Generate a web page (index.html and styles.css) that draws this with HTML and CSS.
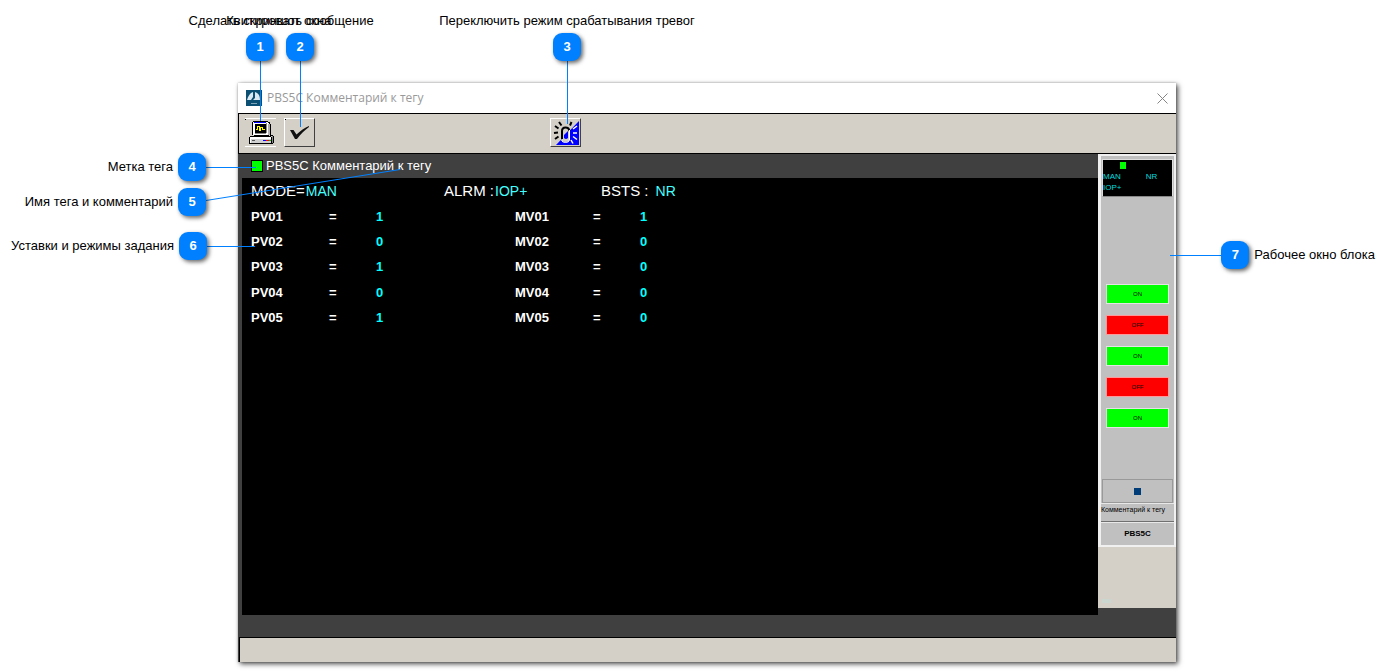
FILE: index.html
```html
<!DOCTYPE html>
<html lang="ru">
<head>
<meta charset="utf-8">
<title>PBS5C Комментарий к тегу</title>
<link rel="stylesheet" href="styles.css">
</head>
<body>
<main class="stage">
  <section class="window">
    <header class="titlebar">
      <svg class="app-icon" viewBox="0 0 16 16" aria-hidden="true">
        <rect width="16" height="16" fill="#0b4f73"/>
        <path d="M1 10C2 6 4 3 7 2V7L5 10zM9 2C12 3 14 5 14 10H7L9 8z" fill="#dbe8ef"/>
        <path d="M5 13.500H11" stroke="#7fa3b7"/>
      </svg>
      <h1 class="title">PBS5C Комментарий к тегу</h1>
      <button class="close" aria-label="Закрыть">
        <svg viewBox="0 0 11 11"><path d="M.5.5 10.5 10.5M10.5.5.5 10.5" stroke="#858585" fill="none"/></svg>
      </button>
    </header>
    <div class="toolbar">
      <button class="tool" aria-label="Сделать скриншот окна">
        <svg viewBox="0 0 26 24" shape-rendering="crispEdges">
          <path d="M4 1H18L21 3V14H4z" fill="#fff"/>
          <path d="M19 3H21V14H19z" fill="#b0b0b0"/>
          <path d="M4 .5H19M3.500 1V14M21.500 3V14M19 1.500H21M20 2.500H21M4 14.500H21" stroke="#000" fill="none"/>
          <path d="M5 1.500H17" stroke="#00f"/><path d="M17.500 2V12M6 12.500H17" stroke="#888" fill="none"/>
          <rect x="6" y="3" width="11" height="9" fill="#000"/>
          <path d="M7 8.500H8.500V5.500H10.500V9.500H11.500V6.500H13.500V8.500H16" stroke="#ff0" fill="none"/>
          <path d="M3 14H21L23 16H1z" fill="#d4d0c8"/>
          <path d="M5 14.500H20" stroke="#000"/>
          <path d="M1 16H23V23H1z" fill="#fff"/><path d="M2 18H22V22H2z" fill="#d0d0d0"/>
          <path d="M23 15H24V22H23z" fill="#888"/>
          <path d="M1 15.500H22M.5 16V23M1 22.500H24M22.500 16V23M21 14.500H24M24.500 15V22" stroke="#000" fill="none"/>
          <path d="M3 19.500H6" stroke="#555"/><path d="M14 19.500H17" stroke="#00f"/><path d="M17 19.500H20" stroke="#f00"/><path d="M20 19.500H22" stroke="#0b0"/>
        </svg>
      </button>
      <button class="tool raised" aria-label="Квитировать сообщение">
        <svg viewBox="0 0 26 24"><path d="M3 9 6.500 9 9.500 13.500C13 10 18 6.500 22 5V6C18 9 13.500 13 10 18L8 18z" fill="#111"/></svg>
      </button>
      <button class="tool raised alarm" aria-label="Переключить режим срабатывания тревог">
        <svg viewBox="0 0 26 24">
          <path d="M26 0V24H3z" fill="#00f"/>
          <path d="M8.500 10Q8.500 6.500 12.500 6.500T16.500 10V18.500Q16.500 21 12.500 21T8.500 18.500z" fill="#d4d0c8"/>
          <path d="M9 18V10Q9 6.500 12.500 6.500T16.500 10" stroke="#000" stroke-width="2" fill="none"/>
          <path d="M11 14 15 10V17Q13 19 11 17z" fill="#00f"/>
          <path d="M16.500 9V19Q16 21.500 12.500 21.500T8.500 19" stroke="#fff" fill="none"/>
          <path d="M6 1 8.500 4.500M18.500 1 17 4.500M2 5 5.500 7.500M1 12 5 11.500M2 18 5.500 15.500" stroke="#000" stroke-width="2" fill="none"/>
          <path d="M20 8 24 5M20 12H24M20 15.500 24 18.500M18 19 20 22.500" stroke="#fff" stroke-width="1.500" fill="none"/>
        </svg>
      </button>
    </div>
    <div class="workspace">
      <div class="details">
        <h2 class="tag-head"><span class="mark"></span>PBS5C Комментарий к тегу</h2>
        <dl class="modes">
          <div class="mode"><dt>MODE=</dt><dd>MAN</dd></div>
          <div class="mode alrm"><dt>ALRM :</dt><dd>IOP+</dd></div>
          <div class="mode bsts"><dt>BSTS :</dt><dd>NR</dd></div>
        </dl>
        <table class="values">
          <tr><th>PV01</th><td class="eq">=</td><td class="pv">1</td><th>MV01</th><td class="eq">=</td><td>1</td></tr>
          <tr><th>PV02</th><td class="eq">=</td><td class="pv">0</td><th>MV02</th><td class="eq">=</td><td>0</td></tr>
          <tr><th>PV03</th><td class="eq">=</td><td class="pv">1</td><th>MV03</th><td class="eq">=</td><td>0</td></tr>
          <tr><th>PV04</th><td class="eq">=</td><td class="pv">0</td><th>MV04</th><td class="eq">=</td><td>0</td></tr>
          <tr><th>PV05</th><td class="eq">=</td><td class="pv">1</td><th>MV05</th><td class="eq">=</td><td>0</td></tr>
        </table>
      </div>
      <aside class="side">
        <div class="faceplate">
          <div class="lcd">
            <span class="lcd-mark"></span>
            <div class="lcd-row"><span>MAN</span><span>NR</span></div>
            <div class="lcd-row">IOP+</div>
          </div>
          <div class="switches">
            <button class="switch on">ON</button>
            <button class="switch off">OFF</button>
            <button class="switch on">ON</button>
            <button class="switch off">OFF</button>
            <button class="switch on">ON</button>
          </div>
          <button class="mode-button" aria-label="Режим"><span class="square"></span></button>
          <p class="comment">Комментарий к тегу</p>
          <p class="tag-name">PBS5C</p>
        </div>
        <span class="hint"></span>
      </aside>
    </div>
    <footer class="status"></footer>
  </section>

  <svg class="leaders" width="600" height="260" aria-hidden="true">
    <path d="M260.500 61V121M300.500 61V127M567.500 61V124M206 167.500H256M206 246.500H255" shape-rendering="crispEdges"/>
    <path d="M206 200.500 400 169.500"/>
  </svg>
  <div class="callout top c1"><span class="label">Сделать скриншот окна</span><b class="badge">1</b></div>
  <div class="callout top c2"><span class="label">Квитировать сообщение</span><b class="badge">2</b></div>
  <div class="callout top c3"><span class="label">Переключить режим срабатывания тревог</span><b class="badge">3</b></div>
  <div class="callout left c4"><span class="label">Метка тега</span><b class="badge">4</b></div>
  <div class="callout left c5"><span class="label">Имя тега и комментарий</span><b class="badge">5</b></div>
  <div class="callout left c6"><span class="label">Уставки и режимы задания</span><b class="badge">6</b></div>
  <div class="callout right c7"><i class="lead"></i><b class="badge">7</b><span class="label">Рабочее окно блока</span></div>
</main>
</body>
</html>
```
FILE: styles.css
```css
* { box-sizing: border-box; }
body, h1, h2, p, dl, dd { margin: 0; }
body {
  background: #fff;
  color: #000;
  font: 13px/16px "Liberation Sans", Arial, sans-serif;
}
button { padding: 0; border: 0; background: none; font: inherit; color: inherit; }
svg { display: block; }

.stage {
  position: relative;
  min-height: 100vh;
  padding: 83px 214px 9px 238px;
  display: flex;
  overflow: hidden;
}
.window {
  flex: 1;
  display: flex;
  flex-direction: column;
  background: #404040;
  box-shadow: 2px 2px 5px rgba(0, 0, 0, .7), 0 0 2px rgba(0, 0, 0, .25);
}

.titlebar {
  display: flex;
  align-items: center;
  height: 30px;
  padding: 0 8px;
  background: #fff;
}
.app-icon { width: 16px; height: 16px; }
.title {
  flex: 1;
  margin-left: 5px;
  font: 12px/16px "Open Sans", "Noto Sans", sans-serif;
  color: #999;
}
.close svg { width: 11px; height: 11px; }

.toolbar {
  display: flex;
  align-items: flex-start;
  gap: 8px;
  height: 41px;
  padding: 4px 6px;
  background: #d4d0c8;
  border: 1px solid #000;
  border-right: 0;
}
.tool {
  width: 31px;
  height: 29px;
  padding: 2px;
  border-top: 1px solid #fff;
  border-bottom: 1px solid #fff;
  background: linear-gradient(#000, #000) 0 0 / 1px 1px no-repeat;
}
.tool:first-child { padding-left: 4px; }
.tool svg { width: 26px; height: 24px; }
.raised {
  border: 1px solid #fff;
  border-right-color: #404040;
  border-bottom-color: #404040;
}
.alarm { margin-left: 227px; background: none; }

.workspace { flex: 1; display: flex; padding: 0 0 22px 4px; }
.details { flex: 1; background: #000; color: #fff; }
.tag-head {
  display: flex;
  align-items: center;
  gap: 3px;
  height: 24px;
  padding-left: 9px;
  background: #404040;
  font-size: 13px;
  font-weight: normal;
}
.mark { width: 12px; height: 12px; background: #0f0; border: 1px solid #000; }
.modes { display: flex; height: 26px; padding-left: 9px; font-size: 15px; line-height: 26px; }
.mode { display: flex; gap: 1px; width: 193px; }
.mode dd { color: #4ff; font-size: 14px; }
.alrm { width: 157px; }
.bsts { gap: 7px; }

.values { height: 127px; margin-left: 9px; border-collapse: collapse; font-weight: bold; }
.values th, .values td { padding: 0; text-align: left; }
.values th { width: 78px; }
.values td { color: #0ff; }
.values .eq { width: 47px; color: #fff; }
.values .pv { width: 139px; }

.side {
  align-self: flex-start;
  width: 78px;
  height: 454px;
  background: #d4d0c8;
}
.faceplate {
  height: 393px;
  padding: 3px 1px 0;
  background: #c0c0c0;
  border: 2px solid #f0f0f0;
  border-left-width: 3px;
  font-size: 7px;
  line-height: 11px;
}
.lcd {
  height: 38px;
  padding: 2px 0;
  background: #000;
  border: 1px solid #ddd;
  border-bottom-color: #888;
  color: #00dcdc;
  font-size: 8px;
}
.lcd-mark { display: block; width: 6px; height: 7px; margin: 0 0 2px 17px; background: #0f0; }
.lcd-row { display: flex; gap: 25px; }
.switches { display: flex; flex-direction: column; gap: 11px; padding: 87px 4px 51px; }
.switch {
  height: 20px;
  border: 1px solid #e4e4e4;
  font-size: 6px;
  line-height: 8px;
}
.on { background: #0f0; }
.off { background: #f00; border-color: #f99; }
.mode-button {
  display: grid;
  place-items: center;
  width: 100%;
  height: 24px;
  border: 1px solid #999;
}
.square { width: 7px; height: 7px; background: #003c78; }
.comment {
  height: 19px;
  margin: 0 -1px;
  border-top: 1px solid #e8e8e8;
  border-bottom: 1px solid #707070;
  white-space: nowrap;
}
.tag-name {
  margin: 0 -1px;
  border-top: 1px solid #e8e8e8;
  line-height: 22px;
  font-size: 8px;
  font-weight: bold;
  text-align: center;
}
.hint { display: block; width: 9px; height: 4px; margin: 52px 0 0 4px; background: #ccd6d0; }

.status { height: 25px; margin-left: 1px; background: #d4d0c8; border: solid #000; border-width: 1px 0 0 1px; }

.leaders { position: absolute; left: 0; top: 0; fill: none; stroke: #0080ff; pointer-events: none; }
.callout { position: absolute; display: flex; align-items: center; gap: 5px; white-space: nowrap; }
.badge {
  width: 28px;
  height: 28px;
  border-radius: 9px;
  background: #0080ff;
  box-shadow: 2px 2px 4px rgba(0, 0, 0, .6);
  color: #fff;
  line-height: 28px;
  text-align: center;
}
.top { top: 13px; gap: 4px; flex-direction: column; width: 280px; }
.c1 { left: 120px; }
.c2 { left: 160px; }
.c3 { left: 427px; }
.left { left: 0; width: 206px; justify-content: flex-end; }
.c4 { top: 153px; }
.c5 { top: 188px; }
.c6 { top: 232px; width: 207px; }
.right { top: 241px; right: 15px; }
.lead { width: 51px; height: 1px; margin-right: -5px; background: #0080ff; }
```
